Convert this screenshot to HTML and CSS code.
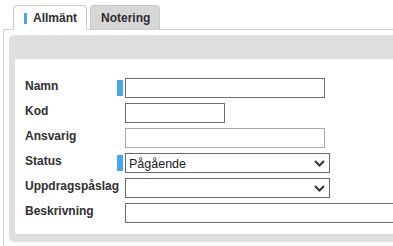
FILE: index.html
```html
<!DOCTYPE html>
<html lang="sv">
<head>
<meta charset="utf-8">
<title>Allmänt</title>
<link rel="stylesheet" href="styles.css">
</head>
<body>
<div class="page">
  <div class="tabs">
    <div class="tab tab-active"><span class="tab-marker"></span><span>Allmänt</span></div>
    <div class="tab tab-inactive"><span>Notering</span></div>
  </div>
  <div class="outer">
    <div class="panel">
      <div class="panel-body">
        <div class="form">
          <div class="label">Namn</div>
          <div class="mark-cell"><span class="req"></span></div>
          <div class="ctl"><div class="input w200"></div></div>

          <div class="label">Kod</div>
          <div class="mark-cell"></div>
          <div class="ctl"><div class="input w100"></div></div>

          <div class="label">Ansvarig</div>
          <div class="mark-cell"></div>
          <div class="ctl"><div class="input w200 light"></div></div>

          <div class="label">Status</div>
          <div class="mark-cell"><span class="req"></span></div>
          <div class="ctl"><div class="select w205"><span class="sel-text">Pågående</span><svg class="chev" width="11" height="7" viewBox="0 0 11 7"><path d="M1 1 L5.5 5.5 L10 1" fill="none" stroke="#333" stroke-width="2"/></svg></div></div>

          <div class="label">Uppdragspåslag</div>
          <div class="mark-cell"></div>
          <div class="ctl"><div class="select w205"><span class="sel-text"></span><svg class="chev" width="11" height="7" viewBox="0 0 11 7"><path d="M1 1 L5.5 5.5 L10 1" fill="none" stroke="#333" stroke-width="2"/></svg></div></div>

          <div class="label">Beskrivning</div>
          <div class="mark-cell"></div>
          <div class="ctl"><div class="input w300"></div></div>
        </div>
      </div>
    </div>
  </div>
</div>
</body>
</html>
```

FILE: styles.css
```css
html, body {
  margin: 0;
  padding: 0;
  background: #ffffff;
  overflow: hidden;
}
body {
  width: 393px;
  height: 246px;
  font-family: "Liberation Sans", Arial, sans-serif;
  color: #333333;
}
.page {
  padding-top: 5px;
}
.tabs {
  display: flex;
  align-items: flex-end;
  gap: 3px;
  margin-left: 3px;
  padding-left: 10px;
  border-bottom: 1px solid #cfcfcf;
}
.tab {
  font-weight: bold;
  font-size: 12px;
  line-height: 14px;
  color: #2e2e2e;
  display: flex;
  align-items: center;
  border: 1px solid #cdcdcd;
  border-radius: 4px 4px 0 0;
  padding: 5px 9px 4px 10px;
}
.tab-active {
  background: #ffffff;
  border-bottom-color: #ffffff;
  margin-bottom: -1px;
}
.tab-inactive {
  background: #d7d7d7;
  border-color: #cacaca;
  border-bottom: none;
}
.tab-marker {
  width: 3px;
  height: 11px;
  background: #45a6f2;
  margin-right: 6px;
}
.outer {
  margin-left: 3px;
  border-left: 1px solid #d3d3d3;
  padding: 5px 0 0 5px;
  overflow: hidden;
  height: 220px;
}
.panel {
  width: 440px;
  background: #dfdfdf;
  border-top: 1px solid #e6e6e6;
  border-radius: 5px;
  padding: 23px 0 8px 6px;
}
.panel-body {
  background: #ffffff;
  padding: 19px 0 11px 10px;
  border-radius: 2px 0 0 2px;
}
.form {
  display: grid;
  grid-template-columns: 92px 8px auto;
  grid-auto-rows: 20px;
  row-gap: 5px;
}
.label {
  font-weight: bold;
  font-size: 12px;
  line-height: 14px;
  color: #303030;
  padding-top: 1px;
}
.mark-cell {
  display: flex;
  align-items: center;
}
.req {
  width: 6px;
  height: 16px;
  background: #45a6f2;
}
.ctl {
  display: flex;
}
.input {
  box-sizing: border-box;
  height: 20px;
  border: 1px solid #6e6e6e;
  background: #ffffff;
}
.input.light {
  border-color: #a9a9a9;
}
.w100 { width: 100px; }
.w200 { width: 200px; }
.w205 { width: 205px; }
.w300 { width: 300px; }
.select {
  box-sizing: border-box;
  height: 20px;
  border: 1px solid #6a6a6a;
  background: #ffffff;
  display: flex;
  align-items: center;
  justify-content: space-between;
  padding: 0 4px 0 3px;
}
.sel-text {
  font-size: 12.5px;
  line-height: 14px;
  color: #222222;
  padding-top: 1px;
}
.chev {
  display: block;
}
```
